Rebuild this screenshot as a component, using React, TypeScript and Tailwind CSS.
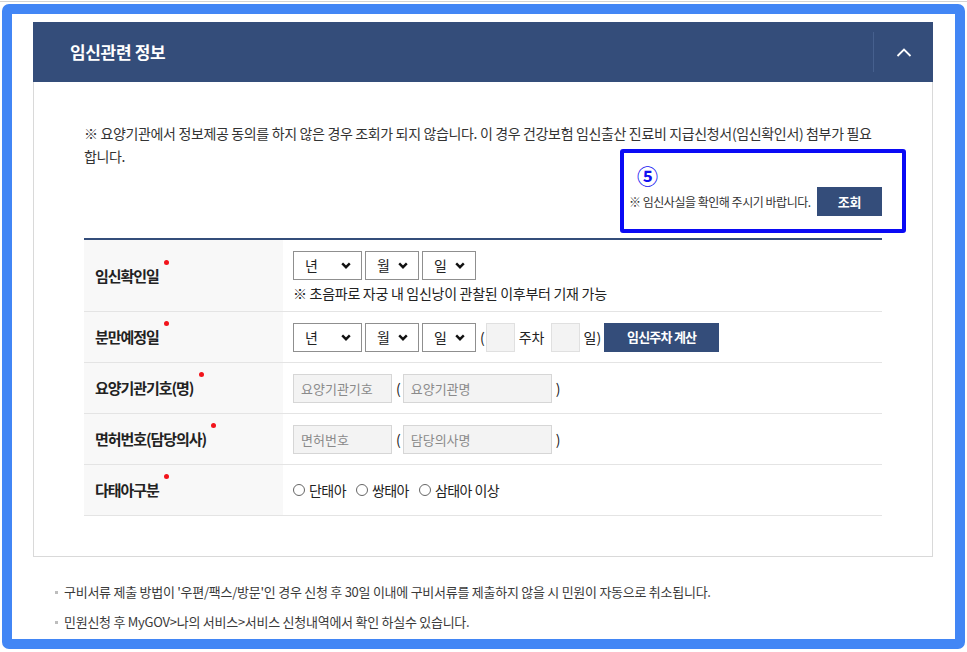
import React from 'react';

function Select({ label, width }: { label: string; width: string }) {
    return (
        <div className={`${width} h-[29px] border border-[#8f8f8f] bg-white flex items-center justify-between pl-[11px] pr-[10px] text-[14px] text-[#222]`}>
            <span>{label}</span>
            <svg width="10" height="7" viewBox="0 0 10 7">
                <path d="M1.2 1.4 L5 5.2 L8.8 1.4" stroke="#111" strokeWidth="2.4" fill="none" />
            </svg>
        </div>
    );
}

function Label({ text }: { text: string }) {
    return (
        <div className="w-[199px] shrink-0 self-stretch bg-[#f8f8f8] pl-[11px] flex items-center">
            <span className="flex items-start font-bold text-[15px] text-[#222] tracking-[-0.07em] leading-[20px]">
                {text}
                <span className="ml-[5px] mt-[-6px] w-[5px] h-[5px] rounded-full bg-[#f2141b]" />
            </span>
        </div>
    );
}

function Field({ placeholder, width }: { placeholder: string; width: string }) {
    return (
        <input
            readOnly
            placeholder={placeholder}
            className={`${width} h-[29px] border border-[#d6d6d6] bg-[#f3f3f3] pl-[7px] text-[13px] placeholder:text-[#8a8a8a] outline-none`}
        />
    );
}

function Radio({ label }: { label: string }) {
    return (
        <span className="flex items-center mr-[10px]">
            <span className="w-[12px] h-[12px] rounded-full border border-[#666] bg-white" />
            <span className="ml-[4px] text-[14px] text-[#222] tracking-[-0.04em]">{label}</span>
        </span>
    );
}

export default function App() {
    return (
        <div className="min-h-[652px] bg-white font-['Noto_Sans_CJK_KR',sans-serif] text-[#333]">
            <div className="pt-[1px]">
                <div className="h-px bg-[#d4d4d4]" />
            </div>

            {/* 파란 테두리 프레임 */}
            <div className="mx-[2px] mt-[2px] h-[645px] border-[10px] border-[#4286f5] rounded-[7px] pt-[8px] pl-[21px] pr-[22px]">
                {/* 패널 헤더 */}
                <div className="h-[60px] bg-[#344d7a] flex items-center">
                    <h2 className="flex-1 pl-[37px] text-white font-bold text-[17px] tracking-[-0.02em]">임신관련 정보</h2>
                    <div className="w-px h-[40px] bg-[#46608e]" />
                    <div className="w-[59px] flex justify-center">
                        <svg width="16" height="9" viewBox="0 0 16 9">
                            <path d="M1.5 8 L8 1.5 L14.5 8" stroke="#fff" strokeWidth="1.8" fill="none" />
                        </svg>
                    </div>
                </div>

                {/* 패널 본문 */}
                <div className="border-x border-b border-[#d9d9d9] pl-[50px] pr-[50px] pt-[40px] pb-[40px]">
                    <p className="text-[14px] leading-[23px] text-[#333] tracking-[-0.025em]">
                        <span className="whitespace-nowrap">※ 요양기관에서 정보제공 동의를 하지 않은 경우 조회가 되지 않습니다. 이 경우 건강보험 임신출산 진료비 지급신청서(임신확인서) 첨부가 필요</span>
                        <br />
                        합니다.
                    </p>

                    {/* 조회 영역 (표시 박스) */}
                    <div className="flex justify-end -mt-[19px] -mr-[24px]">
                        <div className="w-[286px] h-[84px] border-[4px] border-[#0a0af5] rounded-[3px] pl-[5px] pr-[20px] pt-[10px]">
                            <div className="pl-[8px] text-[21px] leading-[25px] font-semibold text-[#1010f0]">⑤</div>
                            <div className="flex items-center justify-between mt-[-1px]">
                                <span className="text-[12px] text-[#333] tracking-[-0.04em]">※ 임신사실을 확인해 주시기 바랍니다.</span>
                                <button className="w-[65px] h-[29px] bg-[#344d7a] text-white font-bold text-[13px] tracking-[-0.02em]">조회</button>
                            </div>
                        </div>
                    </div>

                    {/* 입력 테이블 */}
                    <div className="mt-[5px] border-t-2 border-[#344d7a]">
                        <div className="flex h-[72px] border-b border-[#e4e4e4]">
                            <Label text="임신확인일" />
                            <div className="flex-1 pl-[10px] pt-[11px]">
                                <div className="flex gap-[3px]">
                                    <Select label="년" width="w-[69px]" />
                                    <Select label="월" width="w-[54px]" />
                                    <Select label="일" width="w-[54px]" />
                                </div>
                                <div className="mt-[3px] text-[14px] leading-[20px] text-[#222] tracking-[-0.02em]">※ 초음파로 자궁 내 임신낭이 관찰된 이후부터 기재 가능</div>
                            </div>
                        </div>

                        <div className="flex h-[51px] border-b border-[#e4e4e4]">
                            <Label text="분만예정일" />
                            <div className="flex-1 pl-[10px] flex items-center text-[14px] text-[#222]">
                                <div className="flex gap-[3px]">
                                    <Select label="년" width="w-[69px]" />
                                    <Select label="월" width="w-[54px]" />
                                    <Select label="일" width="w-[54px]" />
                                </div>
                                <span className="ml-[4px]">(</span>
                                <span className="ml-[1px] w-[29px] h-[29px] border border-[#e0e0e0] bg-[#f3f3f3]" />
                                <span className="ml-[4px]">주차</span>
                                <span className="ml-[6px] w-[29px] h-[29px] border border-[#e0e0e0] bg-[#f3f3f3]" />
                                <span className="ml-[4px]">일)</span>
                                <button className="ml-[3px] w-[115px] h-[29px] bg-[#344d7a] text-white font-bold text-[13px] tracking-[-0.06em]">임신주차 계산</button>
                            </div>
                        </div>

                        <div className="flex h-[51px] border-b border-[#e4e4e4]">
                            <Label text="요양기관기호(명)" />
                            <div className="flex-1 pl-[10px] flex items-center text-[14px] text-[#222]">
                                <Field placeholder="요양기관기호" width="w-[99px]" />
                                <span className="ml-[4px]">(</span>
                                <Field placeholder="요양기관명" width="w-[149px] ml-[2px]" />
                                <span className="ml-[4px]">)</span>
                            </div>
                        </div>

                        <div className="flex h-[51px] border-b border-[#e4e4e4]">
                            <Label text="면허번호(담당의사)" />
                            <div className="flex-1 pl-[10px] flex items-center text-[14px] text-[#222]">
                                <Field placeholder="면허번호" width="w-[99px]" />
                                <span className="ml-[4px]">(</span>
                                <Field placeholder="담당의사명" width="w-[149px] ml-[2px]" />
                                <span className="ml-[4px]">)</span>
                            </div>
                        </div>

                        <div className="flex h-[51px] border-b border-[#e4e4e4]">
                            <Label text="다태아구분" />
                            <div className="flex-1 pl-[10px] flex items-center">
                                <Radio label="단태아" />
                                <Radio label="쌍태아" />
                                <Radio label="삼태아 이상" />
                            </div>
                        </div>
                    </div>
                </div>

                {/* 안내 문구 */}
                <ul className="mt-[25px] pl-[22px] text-[13px] leading-[20px] text-[#3a3a3a] tracking-[-0.02em]">
                    <li className="flex items-center">
                        <span className="w-[3px] h-[3px] bg-[#bdbdbd] mr-[6px]" />
                        구비서류 제출 방법이 '우편/팩스/방문'인 경우 신청 후 30일 이내에 구비서류를 제출하지 않을 시 민원이 자동으로 취소됩니다.
                    </li>
                    <li className="flex items-center mt-[10px]">
                        <span className="w-[3px] h-[3px] bg-[#bdbdbd] mr-[6px]" />
                        민원신청 후 MyGOV&gt;나의 서비스&gt;서비스 신청내역에서 확인 하실수 있습니다.
                    </li>
                </ul>
            </div>
        </div>
    );
}
